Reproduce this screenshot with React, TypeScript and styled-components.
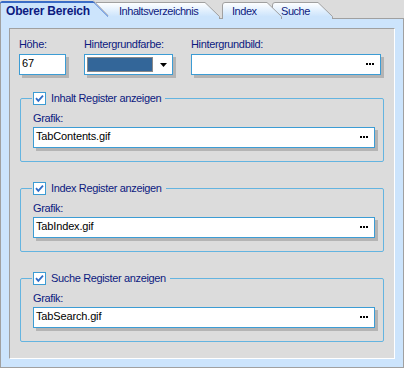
import React, { useId } from "react";
import styled, { createGlobalStyle } from "styled-components";

const palette = {
  face: "#dcdcdc",
  frame: "#cce4fc",
  navy: "#0c1a80",
  edge: "#a0a0a0",
  tabBlue: "#3a6cc6",
  inputBorder: "#3c9cd4",
  groupBorder: "#64b4e0",
  shadow: "#b4b4b4",
};

const GlobalStyle = createGlobalStyle`
  html, body {
    margin: 0;
    padding: 0;
    background: ${palette.face};
  }
  body {
    font-family: "Liberation Sans", Arial, sans-serif;
  }
`;

const Window = styled.div`
  width: 404px;
  height: 368px;
  display: flex;
  flex-direction: column;
  background: ${palette.face};
  overflow: hidden;
`;

const TabStrip = styled.div`
  height: 19px;
  flex-shrink: 0;
  display: flex;
  align-items: flex-end;
  position: relative;
  z-index: 1;
`;

const TabItem = styled.div<{ $width: number; $offset: number; $z: number; $active?: boolean }>`
  position: relative;
  flex-shrink: 0;
  width: ${(p) => p.$width}px;
  height: ${(p) => (p.$active ? 19 : 17)}px;
  margin-left: ${(p) => p.$offset}px;
  z-index: ${(p) => p.$z};

  svg {
    position: absolute;
    left: 0;
    top: 0;
  }
`;

const TabLabel = styled.span<{ $pad: number; $active?: boolean }>`
  position: relative;
  display: block;
  padding: ${(p) => (p.$active ? 4 : 3)}px 0 0 ${(p) => p.$pad}px;
  font-size: ${(p) => (p.$active ? 12 : 11)}px;
  font-weight: ${(p) => (p.$active ? 700 : 400)};
  line-height: ${(p) => (p.$active ? 14 : 13)}px;
  letter-spacing: ${(p) => (p.$active ? "-0.2px" : "-0.45px")};
  color: ${palette.navy};
  white-space: nowrap;
`;

const Frame = styled.div`
  flex: 1;
  display: flex;
  margin-top: -1px;
  padding: 9px 8px 8px;
  background: ${palette.frame};
  border: 1px solid ${palette.edge};
`;

const Page = styled.div`
  flex: 1;
  display: flex;
  flex-direction: column;
  padding: 9px 10px 0;
  background: ${palette.face};
  border-top: 1px solid ${palette.edge};
  border-left: 1px solid ${palette.edge};
  border-right: 1px solid #fff;
  border-bottom: 1px solid #fff;
`;

const TopRow = styled.div`
  display: flex;
  column-gap: 18px;
  margin-left: -1px;
`;

const Field = styled.div<{ $width: number }>`
  display: flex;
  flex-direction: column;
  width: ${(p) => p.$width}px;
`;

const Label = styled.label<{ $gap: number }>`
  display: block;
  margin-bottom: ${(p) => p.$gap}px;
  font-size: 11px;
  line-height: 13px;
  letter-spacing: -0.35px;
  color: ${palette.navy};
  white-space: nowrap;
`;

const TextBox = styled.div`
  box-sizing: border-box;
  height: 21px;
  display: flex;
  align-items: flex-start;
  justify-content: space-between;
  padding: 2px 6px 0 2px;
  background: #fff;
  border: 1px solid ${palette.inputBorder};
  box-shadow: 3px 3px 0 ${palette.shadow};
  font-size: 11px;
  line-height: 13px;
  letter-spacing: -0.15px;
  color: #000;
`;

const Browse = styled.svg`
  margin-top: 6px;
  flex-shrink: 0;
`;

const ColorBox = styled(TextBox)`
  align-items: center;
  padding: 0 5px 0 2px;
`;

const Swatch = styled.div<{ $color: string }>`
  box-sizing: border-box;
  width: 66px;
  height: 15px;
  background: ${(p) => p.$color};
  border: 1px solid #8a8a8a;
`;

const GroupList = styled.div`
  display: flex;
  flex-direction: column;
  gap: 20px;
  margin-top: 17px;
`;

const Group = styled.fieldset`
  margin: 0;
  min-width: 0;
  padding: 7px 8px 13px 12px;
  border: 1px solid ${palette.groupBorder};
  border-radius: 2px;
`;

const Legend = styled.legend`
  display: flex;
  align-items: center;
  gap: 5px;
  height: 13px;
  margin-left: -1px;
  padding: 0 4px 0 1px;
  font-size: 11px;
  line-height: 13px;
  letter-spacing: -0.35px;
  color: ${palette.navy};
  white-space: nowrap;
`;

const Dots = () => (
  <Browse width="8" height="2" viewBox="0 0 8 2">
    <rect x="0" y="0" width="2" height="2" fill="#000" />
    <rect x="3" y="0" width="2" height="2" fill="#000" />
    <rect x="6" y="0" width="2" height="2" fill="#000" />
  </Browse>
);

const CheckMark = () => (
  <svg width="13" height="13" viewBox="0 0 13 13">
    <rect x="0.5" y="0.5" width="12" height="12" fill="#fff" stroke={palette.inputBorder} />
    <path d="M3 6.2 L5.3 8.8 L10 3.6" fill="none" stroke="#2f6cc8" strokeWidth="1.8" />
  </svg>
);

const ActiveTab: React.FC<{ title: string }> = ({ title }) => (
  <TabItem $width={109} $offset={0} $z={10} $active>
    <svg width="109" height="19" viewBox="0 0 109 19">
      <path d="M0 19 V3.5 Q0 1 2.5 1 H93 L108 16 V19 Z" fill={palette.tabBlue} />
      <path d="M1 19 V3 H94 L108 17 V19 Z" fill={palette.frame} />
      <path d="M0.5 19 V3.5" stroke={palette.edge} />
      <path d="M93.5 0.5 L108.5 15.5" stroke="#c4c4c4" />
    </svg>
    <TabLabel $pad={6} $active>
      {title}
    </TabLabel>
  </TabItem>
);

const Tab: React.FC<{ title: string; width: number; offset: number; pad: number; z: number }> = ({
  title,
  width,
  offset,
  pad,
  z,
}) => {
  const gradientId = useId();
  return (
    <TabItem $width={width} $offset={offset} $z={z}>
      <svg width={width} height="17" viewBox={`0 0 ${width} 17`}>
        <defs>
          <linearGradient id={gradientId} x1="0" y1="0" x2="0" y2="1">
            <stop offset="0" stopColor="#ffffff" />
            <stop offset="0.85" stopColor={palette.frame} />
          </linearGradient>
        </defs>
        <path
          d={`M0.5 17 V3 Q0.5 0.5 3 0.5 H${width - 15} L${width - 0.5} 14.5 V17`}
          fill={`url(#${gradientId})`}
          stroke={palette.edge}
        />
      </svg>
      <TabLabel $pad={pad}>{title}</TabLabel>
    </TabItem>
  );
};

const registers = [
  { title: "Inhalt Register anzeigen", file: "TabContents.gif" },
  { title: "Index Register anzeigen", file: "TabIndex.gif" },
  { title: "Suche Register anzeigen", file: "TabSearch.gif" },
];

const App: React.FC = () => {
  return (
    <>
      <GlobalStyle />
      <Window>
        <TabStrip>
          <ActiveTab title="Oberer Bereich" />
          <Tab title="Inhaltsverzeichnis" width={130} offset={-19} pad={29} z={3} />
          <Tab title="Index" width={60} offset={2} pad={10} z={2} />
          <Tab title="Suche" width={61} offset={-10} pad={9} z={1} />
        </TabStrip>
        <Frame>
          <Page>
            <TopRow>
              <Field $width={47}>
                <Label $gap={3}>Höhe:</Label>
                <TextBox>67</TextBox>
              </Field>
              <Field $width={89}>
                <Label $gap={3}>Hintergrundfarbe:</Label>
                <ColorBox>
                  <Swatch $color="#336699" />
                  <svg width="7" height="4" viewBox="0 0 7 4">
                    <polygon points="0,0 7,0 3.5,4" fill="#000" />
                  </svg>
                </ColorBox>
              </Field>
              <Field $width={190}>
                <Label $gap={3}>Hintergrundbild:</Label>
                <TextBox>
                  <span />
                  <Dots />
                </TextBox>
              </Field>
            </TopRow>
            <GroupList>
              {registers.map((r) => (
                <Group key={r.file}>
                  <Legend>
                    <CheckMark />
                    <span>{r.title}</span>
                  </Legend>
                  <Label $gap={2}>Grafik:</Label>
                  <TextBox>
                    <span>{r.file}</span>
                    <Dots />
                  </TextBox>
                </Group>
              ))}
            </GroupList>
          </Page>
        </Frame>
      </Window>
    </>
  );
};

export default App;
